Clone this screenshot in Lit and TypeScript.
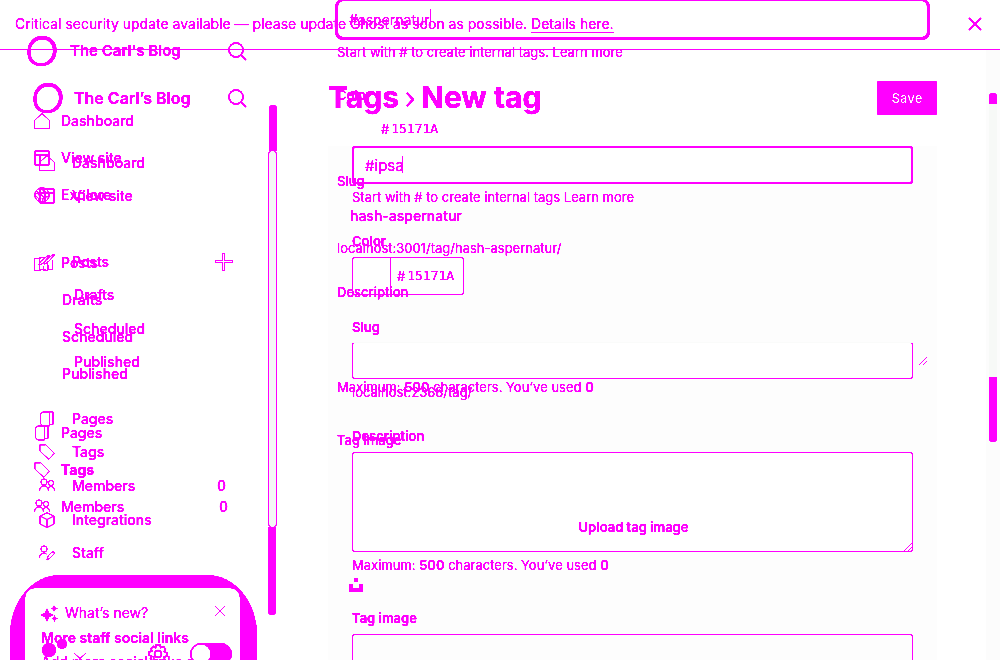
import { LitElement, html, svg, css } from "lit";
import { customElement } from "lit/decorators.js";

const shapes: Record<string, unknown> = {
  home: svg`<path d="M.5 7.500 8 .5l7.500 7v8H.5Z"/>`,
  site: svg`<rect x="1" y="1" width="14" height="14" rx="1" stroke-width="1.500"/><path d="M1 5h14M6 5v10"/>`,
  globe: svg`<circle cx="8" cy="8" r="7.2"/><path d="M1 6c4 2 5-1 5-5M5 15c1-4-2-5-4-6M9 1c-1 4 3 4 6 5M9 15c-1-4 1-6 6-5M6 7l4 3M3 4l4 8M10 3l1 7"/>`,
  post: svg`<path d="M6.500 3.500h-6v12h6M.5 3.500v12M13.500 6v9.500h-4V11M5 10l1-3 8-6.500h2L8 9Z"/>`,
  page: svg`<path d="M4 .8h10v12.700h-3M1.500 3l2-2h7v14H4l-2.500-2Z"/>`,
  tag: svg`<path d="M.8 .8h6l8.500 8.500-5.500 6L.8 7Z"/>`,
  members: svg`<circle cx="5" cy="4" r="3"/><circle cx="12" cy="5" r="2.500"/><path d="M.5 13c0-7 9-7 9 0M9.500 10c2-3 6-1 6 3"/>`,
  cube: svg`<path d="M8 .8 15 4v8l-7 3.500L1 12V4Zm0 6.700L1 4m7 3.500L15 4M8 7.500v8"/>`,
  staff: svg`<circle cx="5" cy="4" r="3"/><path d="M.5 13c0-5 5-6 7-4M8 15l1-4 4-4c2-1 3 1 2 2l-4 4Z"/>`,
};
const icon = (n: string) =>
  html`<svg class="icon" viewBox="0 0 16 16" aria-hidden="true">${shapes[n]}</svg>`;
const ring = html`<svg class="ring" viewBox="0 0 30 30" aria-hidden="true">
  <path fill-rule="evenodd" d="M15 0C24 0 30 6 29.500 15S23 30 14 30 0 24 .5 15 7 0 15 0ZM15 3.500C8 3.500 3.500 9 3.500 16S8 27.500 14 27.500 26 22 26 15 22 3.500 15 3.500Z"/></svg>`;
const search = html`<button class="bare" aria-label="Search"><svg class="search" viewBox="0 0 19 19"><circle cx="8" cy="8" r="7"/><path d="m13 13 5 5"/></svg></button>`;
const grip = html`<svg class="grip" viewBox="0 0 8 8" aria-hidden="true"><path d="M.5 7.500l7-7M4.500 7.500l3-3"/></svg>`;

@customElement("app-root")
export class AppRoot extends LitElement {
  static styles = css`
    :host { display: block; height: 100vh; overflow: hidden; background: #fff; color: #f0f;
      font: 400 14px/20px Inter, sans-serif; }
    * { box-sizing: border-box; }
    .page { display: grid; height: 100%; background: #fff; filter: url(#solid); overflow: hidden; }
    .defs { position: absolute; width: 0; height: 0; }
    .layer { grid-area: 1 / 1; min-width: 0; min-height: 0; height: 100vh; display: grid;
      grid-template-columns: 264px 1fr; overflow: hidden; }
    svg { display: block; fill: none; stroke: currentColor; }
    .icon { width: 16px; height: 16px; stroke-width: 1; flex: none; }
    .ring { width: 30px; height: 30px; fill: currentColor; stroke: none; flex: none; }
    .search { width: 19px; height: 19px; stroke-width: 1.500; }
    button, input, textarea { font: inherit; color: inherit; margin: 0; }
    .bare { border: 0; padding: 0; background: none; display: block; }
    a { color: inherit; text-decoration: none; }
    b { font-weight: 600; }
    ul { list-style: none; margin: 0; padding: 0; }
    .brand { display: flex; align-items: center; font-weight: 600; font-size: 15px; }
    .brand .name { flex: 1; }
    .item { display: flex; align-items: center; font-weight: 500; }
    .item .label { flex: 1; }

    .banner { grid-area: 1 / 1; align-self: start; height: 50px; padding: 0 18px 2px 15px; z-index: 2;
      display: flex; align-items: center; justify-content: space-between; border-bottom: 1px solid; }
    .banner a { text-decoration: underline; text-underline-offset: 3px; }
    .cross { width: 14px; height: 14px; stroke-width: 1.500; }

    .base { background: linear-gradient(#fcfcfc, #fcfcfc) right bottom / 14px calc(100% - 50px) no-repeat; }
    .side { padding: 83px 17px 0 33px; }
    .side .brand { gap: 11px; height: 30px; font-size: 16px; }
    .side ul { display: flex; flex-direction: column; }
    .side .item { flex: 1; gap: 17px; padding-left: 6px; }
    .side .sub { padding-left: 41px; }
    .side .count { padding-right: 21px; }
    .side .first { margin-top: 33px; height: 67px; }
    .side .group { margin-top: 32px; height: 134px; }
    .side .near { margin-top: 23px; height: 168px; }
    .plus { width: 18px; height: 18px; margin-right: 14px; stroke-width: 1; }
    .main { padding: 79px 63px 0 64px; display: flex; flex-direction: column; }
    .top { display: flex; justify-content: space-between; align-items: center; height: 36px; }
    h1 { margin: 0; font-size: 30px; line-height: 36px; font-weight: 700; display: flex; align-items: center; gap: 7px; }
    .chev { width: 8px; height: 15px; stroke-width: 2; margin-top: 4px; }
    .save { width: 60px; height: 34px; border: 0; border-radius: 2px; background: #f0f; color: #fff; font-size: 13px; padding: 0; font-weight: 600; margin-top: 2px; }
    .card { margin-top: 31px; padding: 0 24px; background: #fdfdfd; flex: 1; font-size: 13px; }
    .entry { position: relative; }
    .caret { position: absolute; top: 10px; width: 1px; height: 17px; background: #f0f; }
    .c1 { left: 50px; }
    .c2 { left: 95px; }
    .box { display: block; width: 100%; height: 38px; border: 2px solid; border-radius: 3px; background: #fff; padding: 0 11px; font-size: 15px; outline: 0; }
    .hint { margin: 0; height: 20px; }
    .card .hint { margin-top: 3px; }
    .card label, .card .title { display: block; height: 20px; font-weight: 600; }
    .card .gap { margin-top: 24px; }
    .card .tight { margin-top: 22px; }
    .card .far { margin-top: 33px; }
    .color { display: grid; grid-template-columns: 37px 1fr; height: 38px; margin-top: 6px; border: 1px solid; border-radius: 3px; width: 112px; background: #fff; }
    .hex { display: flex; align-items: center; gap: 2px; font-size: 13px; }
    .color .hex { border-left: 1px solid; padding-left: 6px; }
    .hex input { border: 0; padding: 0; width: 56px; background: none; outline: 0; font: 13px/20px "DejaVu Sans Mono", monospace; }
    .slug { height: 37px; margin-top: 5px; border: 1px solid; border-top-color: #fafafa; border-radius: 3px; }
    .area { display: block; width: 100%; height: 100px; border: 1px solid; border-radius: 3px; background: #fff; resize: none; outline: 0; }
    .wrap { position: relative; margin-top: 6px; }
    .grip { position: absolute; right: 1px; bottom: 1px; width: 8px; height: 8px; stroke-width: 1; }
    .drop { height: 60px; margin-top: 6px; border: 1px solid; border-radius: 3px; }

    .rails { grid-template-columns: 9px 1fr 8px; padding: 0 3px 0 268px; }
    .rail { margin-top: 105px; height: 510px; display: flex; flex-direction: column; }
    .rail i { display: block; }
    .cap { height: 46px; width: 8px; margin-left: 1px; background: #f0f; border-radius: 4px 4px 0 0; }
    .track { height: 376px; border: 1px solid #f0f; border-width: 0 1px; background: #f4f4f6; border-radius: 4px; }
    .foot { flex: 1; width: 8px; background: #f0f; border-radius: 0 0 4px 4px; }
    .rail.right { grid-column: 3; margin-top: 93px; height: 349px; }
    .right .cap { height: 11px; margin: 0; }
    .right .track { height: 273px; border: 0; border-radius: 0; background: #f7f7f7; }

    .over .left { display: flex; flex-direction: column; padding: 36px 17px 0 27px; }
    .over .brand { gap: 13px; height: 30px; }
    .over .item { height: 37px; gap: 11px; padding-left: 7px; }
    .over .sub { padding-left: 35px; }
    .over .count { padding-right: 19px; }
    .over .first { margin-top: 36px; }
    .over .group { margin-top: 31px; }
    .over .near { margin-top: 22px; }
    .over .on { font-weight: 700; }
    .tools { display: flex; align-items: center; height: 22px; margin-top: 118px; padding: 0 15px 0 14px; }
    .who { width: 26px; height: 22px; fill: currentColor; stroke: none; flex: none; overflow: visible; }
    .down { width: 12px; height: 6px; margin: 4px 0 0 7px; flex: none; }
    .gear { width: 20px; height: 20px; margin: 0 auto 0 62px; stroke-width: 1.500; flex: none; }
    .switch { appearance: none; width: 42px; height: 22px; border-radius: 11px; border: 1px solid; flex: none;
      background: radial-gradient(circle at 10px 10px, #fff 9px, #f0f 10px); }
    .over .right-side { padding: 0 70px 0 71px; font-size: 13px; }
    .wide { height: 41px; margin-top: -1px; border: 3px solid; border-top-width: 2px; border-radius: 8px; font-size: 14px; background: none; }
    .inner { padding-left: 2px; }
    .field { display: block; height: 20px; font-weight: 500; }
    .plain { display: block; border: 0; background: none; padding: 0 0 0 13px; height: 20px; width: 100%; font-size: 14px; font-weight: 500; outline: 0; }
    .over .hex { height: 20px; padding-left: 44px; }
    .i1 { margin-top: 2px; }
    .i2 { margin-top: 23px; }
    .i3 { margin-top: 14px; }
    .i4 { margin-top: 32px; }
    .i5 { margin-top: 15px; }
    .i6 { margin-top: 12px; }
    .i7 { margin-top: 24px; }
    .i8 { margin-top: 75px; }
    .i9 { margin-top: 33px; }
    .upload { display: block; margin: 67px auto 0; font-size: 13px; font-weight: 600; height: 20px; }
    .unsplash { width: 14px; height: 14px; fill: currentColor; stroke: none; margin: 41px 0 0 12px; }
    .ruler { position: relative; height: 0; }
    .ruler .grip { right: 3px; bottom: -63px; }

    .news { grid-area: 1 / 1; align-self: end; justify-self: start; width: 247px; height: 85px; margin-left: 10px;
      background: #f0f; border-radius: 50px 50px 0 0 / 60px 60px 0 0; padding: 13px 17px 0 15px; overflow: hidden; }
    .panel { background: #fff; height: 90px; border-radius: 10px 10px 0 0; padding: 14px 15px 0 16px; }
    .panel .head { display: flex; align-items: center; height: 22px; gap: 7px; }
    .panel .head .label { flex: 1; }
    .spark { width: 17px; height: 17px; fill: currentColor; stroke: none; }
    .small { width: 10px; height: 10px; margin-bottom: 4px; }
    .panel p { margin: 4px 0 0; line-height: 20px; font-size: 14px; white-space: nowrap; }
    .panel .strong { font-weight: 600; }
    .over { z-index: 1; }
  `;

  row(name: string, pic: string, cls = "", extra: unknown = "") {
    return html`<li class="item ${cls}">${pic ? icon(pic) : ""}<a class="label" href="#">${name}</a>${extra}</li>`;
  }

  render() {
    return html`
    <div class="page">
      <svg class="defs" aria-hidden="true"><filter id="solid" color-interpolation-filters="sRGB" x="0" y="0" width="1" height="1">
        <feComponentTransfer><feFuncG type="table" tableValues="0 0 0 0 0 0 0 0.2 0.9 0.93 1"/></feComponentTransfer></filter></svg>

      <div class="layer base">
        <nav class="side">
          <div class="brand">${ring}<span class="name">The Carl’s Blog</span>${search}</div>
          <ul class="first">${this.row("Dashboard", "home")}${this.row("View site", "site")}</ul>
          <ul class="group">
            ${this.row("Posts", "post", "", html`<button class="bare" aria-label="New post"><svg class="plus" viewBox="0 0 18 18"><path d="M7.500 7.500V.5h2v7h8v2h-8v8h-2v-8H.5v-2Z"/></svg></button>`)}
            ${this.row("Drafts", "", "sub")}${this.row("Scheduled", "", "sub")}${this.row("Published", "", "sub")}
          </ul>
          <ul class="group near">
            ${this.row("Pages", "page")}${this.row("Tags", "tag")}${this.row("Members", "members", "count", html`<span>0</span>`)}
            ${this.row("Integrations", "cube")}${this.row("Staff", "staff")}
          </ul>
        </nav>
        <main class="main">
          <div class="top">
            <h1>Tags <svg class="chev" viewBox="0 0 8 15"><path d="m1 1 6 6.500L1 14"/></svg> New tag</h1>
            <button class="save">Save</button>
          </div>
          <div class="card">
            <div class="entry"><input class="box" aria-label="Name" value="#ipsa"><span class="caret c1"></span></div>
            <p class="hint">Start with # to create internal tags <a href="#">Learn more</a></p>
            <label class="gap" for="hex">Color</label>
            <div class="color"><span></span><span class="hex">#<input id="hex" value="15171A"></span></div>
            <label class="tight" for="slug">Slug</label>
            <input class="box slug" id="slug">
            <p class="hint">localhost:2368/tag/</p>
            <label class="gap" for="desc">Description</label>
            <div class="wrap"><textarea class="area" id="desc"></textarea>${grip}</div>
            <p class="hint">Maximum: <b>500</b> characters. You’ve used <b>0</b></p>
            <div class="title far">Tag image</div>
            <div class="drop"></div>
          </div>
        </main>
      </div>

      <aside class="news"><div class="panel">
        <div class="head"><svg class="spark" viewBox="0 0 17 17"><path d="M6 3l2 5 5 2-5 2-2 5-2-5-5-2 5-2ZM13 0l1 2.500 3 1-3 1L13 7l-1-2.500-2-1 2-1ZM13.500 10l1 2.500 2.500 1-2.500 1-1 2.500-1-2.500-2-1 2-1Z"/></svg>
          <span class="label">What’s new?</span><button class="bare" aria-label="Dismiss"><svg class="small" viewBox="0 0 10 10"><path d="m.5 .5 9 9m0-9-9 9"/></svg></button></div>
        <p class="strong">More staff social links</p><p>Add more social links and</p>
      </div></aside>

      <div class="layer over">
        <nav class="left">
          <div class="brand">${ring}<span class="name">The Carl's Blog</span>${search}</div>
          <ul class="first">${this.row("Dashboard", "home")}${this.row("View site", "site")}${this.row("Explore", "globe")}</ul>
          <ul class="group">${this.row("Posts", "post")}${this.row("Drafts", "", "sub")}${this.row("Scheduled", "", "sub")}${this.row("Published", "", "sub")}</ul>
          <ul class="group near">${this.row("Pages", "page")}${this.row("Tags", "tag", "on")}${this.row("Members", "members", "count", html`<span>0</span>`)}</ul>
          <div class="tools">
            <svg class="who" viewBox="0 0 26 22"><circle cx="8" cy="7" r="7"/><circle cx="21" cy="1" r="5"/></svg>
            <svg class="down" viewBox="0 0 12 6"><path d="m.5 .5 5.500 5 5.500-5"/></svg>
            <svg class="gear" viewBox="0 0 20 20"><circle cx="10" cy="10" r="3.500"/><path d="M8 1h4l.7 2.500 2.800-.9 2 2.500-1.300 2.400L19 9v3l-2.800 1 .5 2.800-2.500 1.700-2.200-1.500-1 3H8l-.8-3-2.700 1-2-2.500L4 12.500 1 11V8l2.800-1-.6-2.700L5.500 2.500l2 1.500Z"/></svg>
            <input class="switch" type="checkbox" aria-label="Night shift">
          </div>
        </nav>
        <section class="right-side">
          <div class="entry"><input class="box wide" aria-label="Tag name" value="#aspernatur"><span class="caret c2"></span></div>
          <div class="inner">
            <p class="hint i1">Start with # to create internal tags. <a href="#">Learn more</a></p>
            <label class="field i2" for="hex2">Color</label>
            <div class="hex i3">#<input id="hex2" value="15171A"></div>
            <label class="field i4" for="slug2">Slug</label>
            <input class="plain i5" id="slug2" value="hash-aspernatur">
            <p class="hint i6">localhost:3001/tag/hash-aspernatur/</p>
            <div class="field i7">Description</div>
            <div class="ruler">${grip}</div>
            <p class="hint i8">Maximum: <b>500</b> characters. You’ve used <b>0</b></p>
            <div class="field i9">Tag image</div>
            <button class="bare upload">Upload tag image</button>
            <svg class="unsplash" viewBox="0 0 14 14"><path d="M5 0h4v4H5zM0 6h4v4h6V6h4v8H0z"/></svg>
          </div>
        </section>
      </div>

      <div class="layer rails" aria-hidden="true">
        <div class="rail"><i class="cap"></i><i class="track"></i><i class="foot"></i></div>
        <div class="rail right"><i class="cap"></i><i class="track"></i><i class="foot"></i></div>
      </div>

      <div class="banner"><span>Critical security update available — please update Ghost as soon as possible. <a href="#">Details here.</a></span>
        <button class="bare" aria-label="Close"><svg class="cross" viewBox="0 0 14 14"><path d="m1 1 12 12M13 1 1 13"/></svg></button></div>
    </div>`;
  }
}
